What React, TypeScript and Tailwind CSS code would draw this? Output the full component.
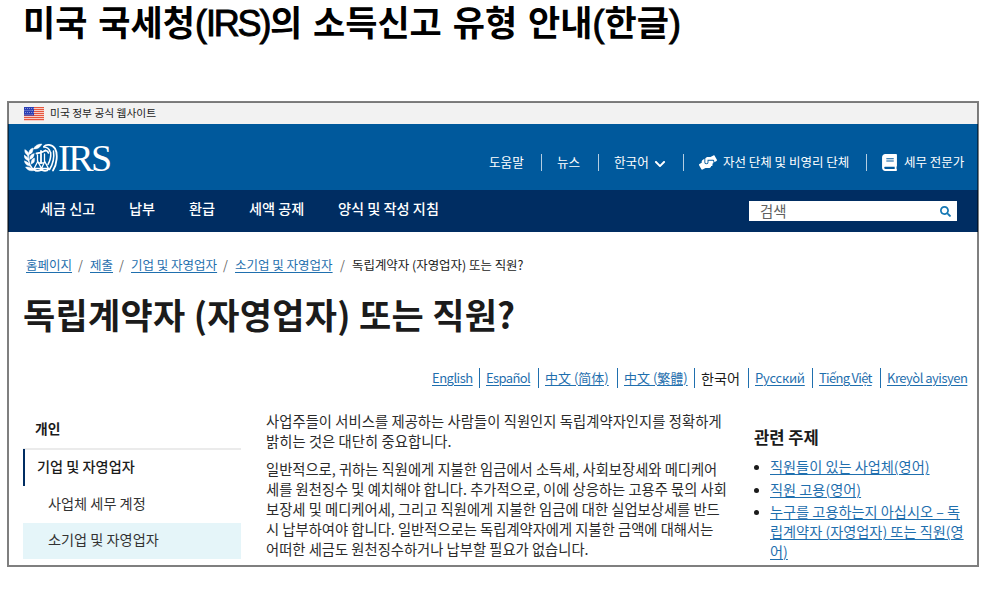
import React from 'react';
import { FaBook, FaChevronDown, FaHandsHelping, FaSearch } from 'react-icons/fa';

function Flag() {
  return (
    <svg className="mt-px block h-[14px] w-5" viewBox="0 0 20 14">
      <rect width="20" height="14" fill="#fff" />
      {[0, 2, 4, 6, 8, 10, 12].map((y) => (
        <rect key={y} y={y} width="20" height="1.3" fill="#e5573f" />
      ))}
      <rect width="10" height="8.6" fill="#2b3fb5" />
      {[1.5, 3.5, 5.5, 7.3].map((y, r) =>
        [1.2, 3.2, 5.2, 7.2, 9].map((x) => (
          <circle key={`${x}-${y}`} cx={x + (r % 2 ? -0.2 : 0.2)} cy={y} r="0.4" fill="#fff" />
        )),
      )}
    </svg>
  );
}

function Emblem() {
  return (
    <svg className="block h-[30px] w-[34px]" viewBox="0 0 34 30" fill="none" stroke="#fff" strokeLinecap="round">
      <path d="M12 28C6 25 3.500 20 4 10" strokeWidth="1.3" />
      <g fill="#fff" stroke="#fff" strokeWidth="0.4">
        <path d="M5 13C1.500 11.500 .5 9.500 .8 6.500 3.800 8 5 10 5 13Z" />
        <path d="M5 18C1.500 17 0 15 0 12 3 13.500 5 15.500 5 18Z" />
        <path d="M6 23C3 23 .800 21 .3 17.800 3.300 18.800 5.500 20 6 23Z" />
        <path d="M10 27.500C6 28.500 3 27 1.500 24 5 23.500 8 24.500 10 27.500Z" />
        <path d="M5 11.500C4.500 8.500 5.500 6 9 5 9.200 8.500 8 11 5 11.500Z" />
        <path d="M5.500 16.500C5.500 13 7 11 10.300 10.500 10 14 8.500 16 5.500 16.500Z" />
        <path d="M7 21C7 17.500 8 15.800 10.500 15 11 18.500 10 20.500 7 21Z" />
        <path d="M9.500 6C11 2.500 13.500 1 18 1 16 4.500 13.500 6.500 9.500 6Z" />
      </g>
      <path d="M20 3.500C22 1 28 1 31 5.500c3 5 2 16-2 22" strokeWidth="1.8" />
      <path d="M20 4c3 .2 5 1.500 6 4.500M21 7.500c2 0 3 1 3.500 2.500" strokeWidth="1.7" />
      <path d="M29.500 8c1 7-.5 13-4 18.500M26.700 9.500c.5 5-.5 8-2.700 12" strokeWidth="1.5" />
      <path d="M12.500 10.500c3-.5 6-1 9-3M17 8v12" strokeWidth="1.8" />
      <path d="M13.500 12v6.500M20.500 11v7.500M14.500 20h5" strokeWidth="1.3" />
      <path d="M13.800 18.500 10 25.500h7.500ZM20.700 18.500 17.500 25.500h7Z" strokeWidth="1.3" />
      <path d="M10 26c1.500 2.500 6 2.500 7.500 0 1.500 2.500 5.500 2.500 7 0" strokeWidth="1.8" />
    </svg>
  );
}

const mainNav = [
  { label: '세금 신고', cls: 'w-[89px]' },
  { label: '납부', cls: 'w-[60px]' },
  { label: '환급', cls: 'w-[60px]' },
  { label: '세액 공제', cls: 'w-[89px]' },
  { label: '양식 및 작성 지침', cls: 'w-[110px]' },
];

const crumbs = [
  { label: '홈페이지', cls: 'w-[64px]' },
  { label: '제출', cls: 'w-[41px]' },
  { label: '기업 및 자영업자', cls: 'w-[104px]' },
  { label: '소기업 및 자영업자', cls: 'w-[117px]' },
];

const languages = [
  { label: 'English', cls: 'w-[47px] tracking-[-0.5px]' },
  { label: 'Español', cls: 'w-[59px] tracking-[-0.6px]' },
  { label: '中文 (简体)', cls: 'w-[79px]' },
  { label: '中文 (繁體)', cls: 'w-[77px]' },
  { label: '한국어', cls: 'w-[54px]', current: true },
  { label: 'Русский', cls: 'w-[64px] tracking-[-0.25px]' },
  { label: 'Tiếng Việt', cls: 'w-[68px] tracking-[-0.7px]' },
  { label: 'Kreyòl ayisyen', cls: 'w-[88px] tracking-[-0.5px]' },
];

function UtilityNav() {
  return (
    <nav className="flex h-[18px] items-center text-[12.6px] text-white">
      <span className="w-[52px]">도움말</span>
      <span className="h-[17px] w-[16px] border-l border-[#b3cde1]" />
      <span className="w-[41px]">뉴스</span>
      <span className="h-[17px] w-[16px] border-l border-[#b3cde1]" />
      <span className="flex w-[69px] items-center gap-[5px]">
        한국어 <FaChevronDown className="mt-[3px] size-3" />
      </span>
      <span className="h-[17px] w-[16px] border-l border-[#b3cde1]" />
      <FaHandsHelping className="h-[15px] w-[18px]" />
      <span className="ml-[6px] w-[143px] text-[12.5px]">자선 단체 및 비영리 단체</span>
      <span className="h-[17px] w-[15px] border-l border-[#b3cde1]" />
      <FaBook className="h-[17px] w-[17px]" />
      <span className="ml-[6px] w-[61px] text-[12.5px]">세무 전문가</span>
    </nav>
  );
}

function Side() {
  return (
    <aside className="w-[218px] text-[14.2px] text-[#1b1b1b]">
      <div className="h-[48px] border-b-2 border-[#ebebeb] pl-[12px] pt-[16px] text-[13.8px] font-bold leading-5">개인</div>
      <div className="-mt-px h-[37px] border-l-2 border-[#002d62] pl-[12px] font-medium leading-[34px]">기업 및 자영업자</div>
      <div className="h-[37px] pl-[25px] leading-[34px] text-[#333]">사업체 세무 계정</div>
      <div className="h-[36px] bg-[#e5f5f9] pl-[25px] leading-[32px] text-[#333]">소기업 및 자영업자</div>
    </aside>
  );
}

const link = 'text-[#1f6fae] underline decoration-1 underline-offset-2';
const titleLatin = "font-['Liberation_Sans',sans-serif] text-[36px] font-normal [-webkit-text-stroke:0.9px_black]";

export default function App() {
  return (
    <div className="h-[601px] w-[991px] overflow-hidden whitespace-nowrap bg-white font-['Noto_Sans_CJK_KR',sans-serif]">
      <h1 className="h-[102px] pl-[23px] text-[35px] font-bold leading-[41px] text-black [word-spacing:3px]">
        미국 국세청
        <span className={`${titleLatin} tracking-[-1px]`}>(</span>
        <span className={`${titleLatin} tracking-[-2.2px]`}>IRS</span>
        <span className={`${titleLatin} tracking-[-1.5px]`}>)</span>
        의 소득신고 유형 안내
        <span className={titleLatin}>(</span>
        한글
        <span className={titleLatin}>)</span>
      </h1>

      <div className="relative ml-2 h-[464px] w-[970px]">
        <div className="flex h-[22px] items-center bg-[#f2f2f2] pl-[16px] text-[10.75px] text-[#1b1b1b]">
          <Flag />
          <span className="mb-px ml-[6px] leading-5">미국 정부 공식 웹사이트</span>
        </div>

        <header className="flex h-[66px] items-center justify-between bg-[#00599c] pl-[16px] pr-[13px]">
          <div className="flex items-center pt-[2px]">
            <Emblem />
            <span className="font-['Liberation_Serif',serif] text-[38px] leading-[38px] tracking-[-2.500px] text-white">IRS</span>
          </div>
          <div className="pt-[10px]">
            <UtilityNav />
          </div>
        </header>

        <div className="flex h-[42px] items-center justify-between bg-[#002d62] pl-[32px] pr-[21px]">
          <nav className="flex pb-[6px] text-[14.2px] font-medium leading-5 text-white">
            {mainNav.map((n) => (
              <span key={n.label} className={n.cls}>{n.label}</span>
            ))}
          </nav>
          <div className="flex h-[20px] w-[208px] items-center justify-between bg-white pl-[11px] pr-[6px] text-[14.4px] leading-5 text-[#606060]">
            검색 <FaSearch className="size-[11px] text-[#1578b5]" />
          </div>
        </div>

        <div className="flex h-[64px] pl-[18px] text-[12.5px] leading-[66px]">
          {crumbs.map((c) => (
            <span key={c.label} className={`flex justify-between ${c.cls}`}>
              <a className={link}>{c.label}</a>
              <span className="mr-[7px] w-[5px] text-[#666]">/</span>
            </span>
          ))}
          <span className="text-[12.45px] text-[#1b1b1b]">독립계약자 (자영업자) 또는 직원?</span>
        </div>

        <h2 className="h-[72px] pl-[15px] text-[35px] font-bold leading-[36px] tracking-[0.29px] text-[#1b1b1b]">독립계약자 (자영업자) 또는 직원?</h2>

        <div className="flex h-[20px] justify-end pr-[10px] text-[13px] leading-5">
          {languages.map((l, i) => (
            <span key={l.label} className={`shrink-0 ${l.cls} ${i ? 'border-l border-[#1f6fae] pl-[6px]' : ''}`}>
              <a className={l.current ? 'text-[14.2px] text-[#1b1b1b]' : link}>{l.label}</a>
            </span>
          ))}
        </div>

        <div className="flex pl-[15px] pt-[14px]">
          <Side />
          <main className="ml-[25px] w-[488px] pt-[9px] text-[14.3px] leading-5 text-[#2b2b2b]">
            <p className="h-[48px] tracking-[0.06px]">
              사업주들이 서비스를 제공하는 사람들이 직원인지 독립계약자인지를 정확하게<br />
              밝히는 것은 대단히 중요합니다.
            </p>
            <p>
              일반적으로, 귀하는 직원에게 지불한 임금에서 소득세, 사회보장세와 메디케어<br />
              세를 원천징수 및 예치해야 합니다. 추가적으로, 이에 상응하는 고용주 몫의 사회<br />
              보장세 및 메디케어세, 그리고 직원에게 지불한 임금에 대한 실업보상세를 반드<br />
              시 납부하여야 합니다. 일반적으로는 독립계약자에게 지불한 금액에 대해서는<br />
              어떠한 세금도 원천징수하거나 납부할 필요가 없습니다.
            </p>
          </main>
          <section className="pt-[25px]">
            <h3 className="text-[16.6px] font-bold leading-5 text-[#1b1b1b]">관련 주제</h3>
            <ul className="list-disc pl-[16px] pt-[9px] text-[14.2px] leading-5 text-[#1b1b1b] marker:text-[12px]">
              <li className="mb-[2.500px]"><a className={link}>직원들이 있는 사업체(영어)</a></li>
              <li className="mb-[2.500px]"><a className={link}>직원 고용(영어)</a></li>
              <li>
                <a className={link}>
                  누구를 고용하는지 아십시오 – 독<br />립계약자 (자영업자) 또는 직원(영<br />어)
                </a>
              </li>
            </ul>
          </section>
        </div>

        <div className="pointer-events-none absolute -inset-px border-2 border-black/50" />
      </div>
    </div>
  );
}
